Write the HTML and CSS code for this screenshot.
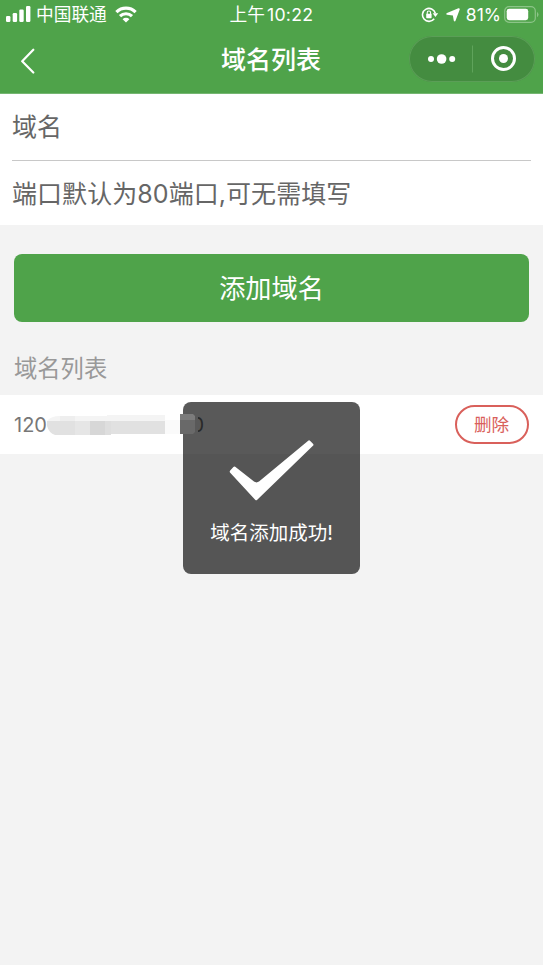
FILE: index.html
```html
<!DOCTYPE html>
<html lang="zh-CN">
<head>
<meta charset="utf-8">
<meta name="viewport" content="width=device-width, initial-scale=1">
<title>域名列表</title>
<link rel="stylesheet" href="styles.css">
</head>
<body>
<header class="header">
  <div class="status">
    <div class="status-left">
      <svg class="signal" width="25" height="16" viewBox="0 0 25 16" fill="#fff"><rect x="0" y="10" width="4.4" height="6" rx="1.2"/><rect x="6.7" y="7" width="4.4" height="9" rx="1.2"/><rect x="13.3" y="3.5" width="4.4" height="12.5" rx="1.2"/><rect x="20" y="0" width="4.4" height="16" rx="1.2"/></svg>
      <span class="carrier">中国联通</span>
      <svg class="wifi" width="22" height="17" viewBox="0 0 22 17" fill="none" stroke="#fff" stroke-width="3.2"><path d="M1.4 6.1a13.7 13.7 0 0 1 19.2 0"/><path d="M5 10.2a8.6 8.6 0 0 1 12 0"/><path d="M7.6 13.2a4.7 4.7 0 0 1 6.8 0L11 16.5z" fill="#fff" stroke="none"/></svg>
    </div>
    <div class="clock">上午<span class="time">10:22</span></div>
    <div class="status-right">
      <svg class="lock" width="18" height="16" viewBox="0 0 18 16" fill="none" stroke="#fff" stroke-width="1.6"><path d="M13.2 11.8A6.5 6.5 0 1 1 14.3 6.3"/><path d="M11.7 6.3h5.5l-2.8 3.6z" fill="#fff" stroke="none"/><rect x="5.2" y="6.8" width="5.4" height="4.4" rx=".7" fill="#fff" stroke="none"/><path d="M6.2 7V5.7a1.7 1.7 0 0 1 3.4 0V7" stroke-width="1.1"/></svg>
      <svg class="arrow" width="14" height="14" viewBox="0 0 14 14" fill="#fff"><path d="M12.4.3Q14 0 13.7 1.6L9.6 12.6Q8.9 14.2 7.8 12.8L6.9 7.4 1.2 6.8Q-.6 6.1 1 5z"/></svg>
      <span class="percent">81%</span>
      <svg class="battery" width="35" height="17" viewBox="0 0 35 17"><rect x=".7" y=".7" width="30.6" height="15.6" rx="4.4" fill="none" stroke="#8cc488" stroke-width="1.2"/><rect x="2.7" y="2.8" width="21.5" height="11.4" rx="2.4" fill="#fff"/><path d="M33 5.7q3 2.8 0 5.6z" fill="#8cc488"/></svg>
    </div>
  </div>
  <div class="nav">
    <svg class="back" width="14" height="26" viewBox="0 0 14 26" fill="none" stroke="#fff" stroke-width="2.2" stroke-linecap="round" stroke-linejoin="round"><path d="M12.3 1.7 1.2 13.2 12.3 24.5"/></svg>
    <h1 class="title">域名列表</h1>
    <div class="capsule">
      <svg width="126" height="46" viewBox="0 0 126 46"><g fill="#fff"><circle cx="22" cy="23" r="3"/><circle cx="32.6" cy="23" r="4.8"/><circle cx="43.2" cy="23" r="3"/><circle cx="94.5" cy="22.5" r="4.5"/></g><path d="M63.5 9.5v27" stroke="#5fa35b"/><circle cx="94.5" cy="22.5" r="11" fill="none" stroke="#fff" stroke-width="3"/></svg>
    </div>
  </div>
</header>
<main>
  <section class="form">
    <div class="field">域名</div>
    <div class="field">端口默认为80端口,可无需填写</div>
  </section>
  <button class="add">添加域名</button>
  <h2 class="list-title">域名列表</h2>
  <div class="row">
    <div class="domain"><span>120</span><span>0</span></div>
    <button class="delete">删除</button>
  </div>
</main>
<div class="toast">
  <svg class="check" width="86" height="62" viewBox="0 0 86 62" fill="#fff"><path d="M1.2 30.6 4.4 26.9Q5.2 26 6.2 26.8L25 41.6Q27.5 43.2 30 41.6L79.5.6Q80.3 0 81 .7L84.2 4Q84.8 4.8 84.2 5.6L28 60Q27.2 60.6 26.4 59.9L1.2 32.8Q.2 31.7 1.2 30.6z"/></svg>
  <div class="toast-text">域名添加成功!</div>
</div>
<svg class="mask" width="154" height="22" viewBox="0 0 154 22">
  <path d="M13 2H60V1H118V7H0Q4 2 13 2z" fill="#f4f4f4"/>
  <path d="M13 2h15v5H13z" fill="#eeeeee"/>
  <path d="M0 7H118V20H64V21H8Q2 19 0 12z" fill="#e1e1e1"/>
  <path d="M28 7h15v14H28z" fill="#e6e6e6"/>
  <path d="M43 7h15v14H43z" fill="#d7d7d7"/>
  <path d="M58 7h6v14h-6z" fill="#dedede"/>
  <path d="M118 6h15v14h-15z" fill="#fafafa"/>
  <path d="M146 2h5v17h-5z" fill="#595959"/>
  <path d="M133 0h13l2 2v4h-15z" fill="#7c7c7c"/>
  <path d="M133 6h15v12l-2 2h-13z" fill="#696969"/>
</svg>
</body>
</html>
```
FILE: styles.css
```css
* { box-sizing: border-box; }
body {
  margin: 0;
  min-height: 965px;
  background: #f3f3f3;
  color: #666;
  font-family: Inter, "Noto Sans CJK SC", sans-serif;
  overflow: hidden;
}
svg { display: block; flex: none; }
button { font-family: inherit; padding: 0; }
.header { height: 94px; background: #4fa34a; color: #fff; border-bottom: 1px solid #75b671; }
.status {
  display: grid;
  grid-template-columns: 1fr auto 1fr;
  height: 29px;
  padding: 0 5px 0 6px;
  align-items: center;
  font-size: 17.7px;
  line-height: 28px;
  white-space: nowrap;
}
.status-left, .status-right { display: flex; align-items: center; }
.status-right { justify-content: flex-end; }
.signal { margin-top: -1px; }
.carrier { margin: 1px 8px 0 5px; }
.wifi { margin-top: -1px; }
.clock { padding-right: 1px; }
.time { margin-left: 2px; letter-spacing: .3px; }
.lock { margin-right: -1px; }
.arrow { margin: 1px 6px 0 8px; }
.percent { margin-right: 3px; font-size: 17.5px; }
.battery { margin-right: -1px; }
.nav {
  display: grid;
  grid-template-columns: 1fr auto 1fr;
  height: 64px;
  padding: 0 8px 0 21px;
  align-items: center;
}
.title { margin: -2px 0 0; font-size: 25px; line-height: 37px; font-weight: 500; transform: translateX(-7px); }
.capsule {
  justify-self: end;
  width: 126px;
  height: 46px;
  margin-top: -5px;
  border-radius: 23px;
  background: #448c40;
  box-shadow: inset 0 0 0 1px #5b9e57;
}
.form { height: 131px; padding: 0 12px; background: #fff; }
.field { height: 66px; font-size: 25px; line-height: 66px; letter-spacing: .06px; }
.field:first-child { border-bottom: 1px solid #c8c8c8; height: 67px; }
.add {
  display: block;
  width: 515px;
  height: 68px;
  margin: 29px 14px 0;
  padding-bottom: 2px;
  border: 0;
  border-radius: 8px;
  background: #4fa34a;
  color: #fff;
  font-size: 26.2px;
}
.list-title { margin: 0; padding: 0 14px; height: 73px; font-size: 23.3px; line-height: 93px; font-weight: 400; color: #999; }
.row { display: flex; justify-content: space-between; align-items: center; height: 59px; padding: 0 14px; background: #fff; }
.domain { display: flex; justify-content: space-between; width: 190px; font-size: 20px; line-height: 28px; color: #777; }
.delete { width: 74px; height: 39px; padding: 0 1px 2px 0; border: 2px solid #d9605b; border-radius: 20px; background: #fff; color: #d9605b; font-size: 17.6px; }
.toast {
  position: absolute;
  left: 183px;
  top: 402px;
  width: 177px;
  height: 172px;
  padding-top: 38px;
  border-radius: 8px;
  background: rgba(0, 0, 0, .65);
  color: #fff;
  text-align: center;
}
.check { margin: 0 auto; }
.toast-text { margin-top: 17px; font-size: 19.5px; line-height: 29px; }
.mask { position: absolute; left: 47px; top: 414px; }
```
